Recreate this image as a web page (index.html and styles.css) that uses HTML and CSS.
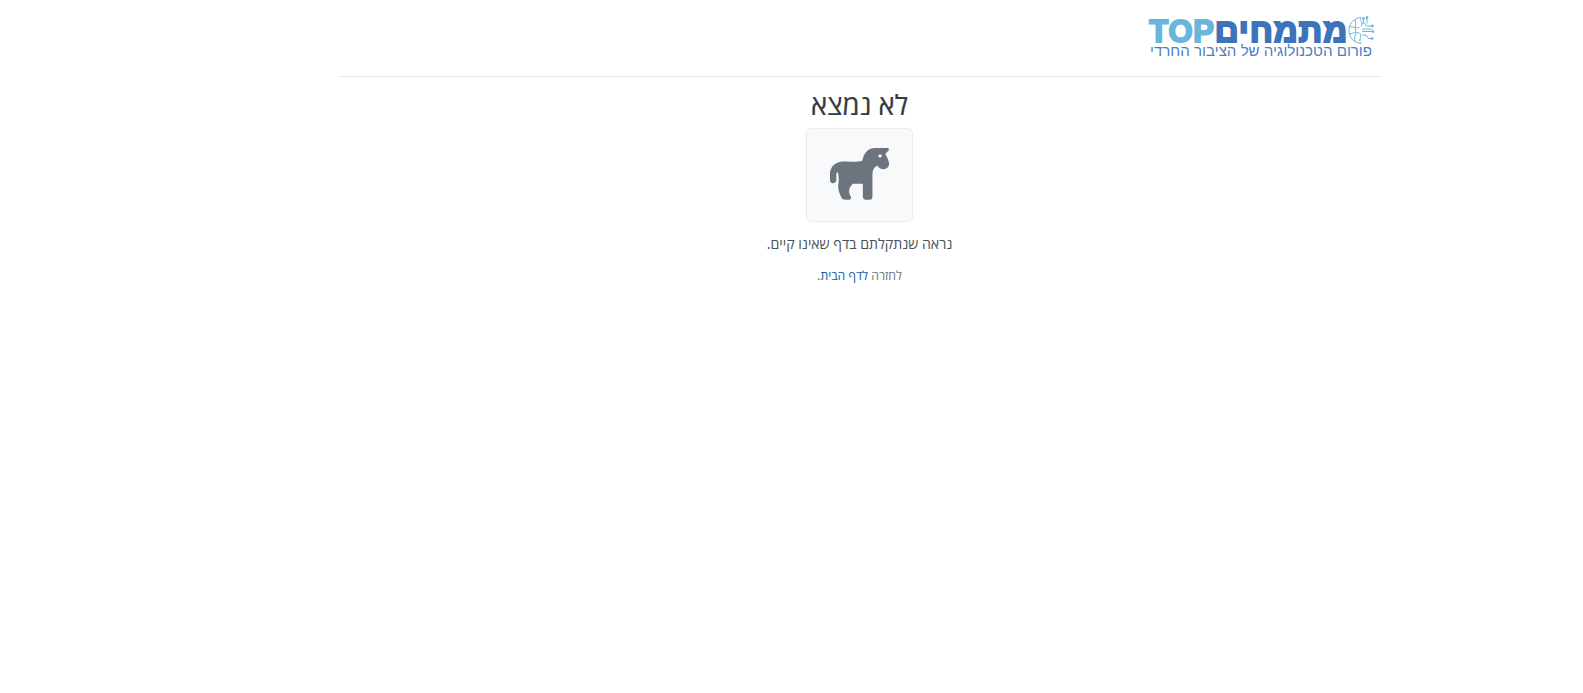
FILE: index.html
```html
<!DOCTYPE html>
<html lang="he" dir="rtl">
<head>
<meta charset="utf-8">
<title>לא נמצא</title>
<link rel="stylesheet" href="styles.css">
</head>
<body>
<div class="wrap">
  <header class="head">
    <a class="logo" href="#">
      <span class="logo-top">
        <svg class="logo-mark" viewBox="0 0 26 29" width="26" height="29" fill="none" stroke="#6db7dc" stroke-width="1">
          <path d="M13 1.500C6 2 1 7.500 1 14.500S6 27 13 27.500"/>
          <path d="M13 1.500c-2 3 3 5 0 9M1.500 10.500c4 0 6 2 10 1M1.500 18c4-1 6-2 10-1M13 27.500c-3-3 1-6-1-10M7 4c2 5-1 9 1 13M7 25.500c-1-3 0-6 1-8"/>
          <path d="M14 7h2.500l2 3h6M14 13h10M14 15.500h11.500M14 19h4l2.500 3.500h3M15.500 2.500V7M19 1.500v6"/>
          <circle cx="15.500" cy="2.500" r="1" fill="#6db7dc"/><circle cx="19" cy="1.500" r="1" fill="#6db7dc"/><circle cx="24.500" cy="10" r="1" fill="#6db7dc"/><circle cx="25" cy="15.500" r="1" fill="#6db7dc"/><circle cx="24" cy="22.500" r="1" fill="#6db7dc"/>
        </svg>
        <span class="logo-words"><span class="logo-he">מתמחים</span><span class="logo-en" dir="ltr">TOP</span></span>
      </span>
      <span class="logo-sub">פורום הטכנולוגיה של הציבור החרדי</span>
    </a>
  </header>
  <main class="main">
    <h1 class="title">לא נמצא</h1>
    <div class="icon-box">
      <svg class="horse" viewBox="140 175 196 190" width="65" height="63" fill="#6c757d">
        <path d="M326 187H285C265 187 252 200 246 226C235 229 210 228 185 228C165 230 151 243 149 262V285C150 291 154 294 159 293C164 292 168 289 168 284V266C169 262 171 260 173 260C175 270 176 280 175 292C173 300 173 310 177 322L184 338C186 341 190 343 195 343H208C212 342 214 338 212 334C208 327 206 322 207 314C208 306 212 301 218 295H248V333C248 339 252 343 257 343H268C274 343 277 339 277 333V268C277 255 281 246 291 240C296 247 302 251 311 251C322 250 328 243 327 233C326 222 320 213 316 205C319 200 323 197 326 195Z"/>
        <circle cx="300" cy="211" r="5" fill="#f8f9fa"/>
      </svg>
    </div>
    <p class="msg">נראה שנתקלתם בדף שאינו קיים.</p>
    <p class="back">לחזרה <a href="#">לדף הבית</a>.</p>
  </main>
</div>
</body>
</html>
```
FILE: styles.css
```css
* { box-sizing: border-box; }
html, body { margin: 0; padding: 0; background: #fff; }
body {
  height: 693px;
  overflow: hidden;
  font-family: "Noto Sans", "Open Sans", "Liberation Sans", sans-serif;
  color: #343a40;
}
.wrap {
  width: 1043px;
  margin-right: 202px;
}
.head {
  height: 77px;
  border-bottom: 1px solid #e9ecef;
  padding: 16px 7px 0 0;
}
.logo {
  display: inline-flex;
  flex-direction: column;
  text-decoration: none;
  width: 226px;
}
.logo-top {
  display: flex;
  align-items: flex-start;
  height: 27px;
  font-family: "Liberation Sans", sans-serif;
  font-weight: 700;
}
.logo-mark { flex: none; }
.logo-words {
  line-height: 29px;
  white-space: nowrap;
}
.logo-he {
  font-size: 33px;
  color: #3d73b8;
  letter-spacing: 0.900px;
  -webkit-text-stroke: 2px #3d73b8;
}
.logo-en {
  font-size: 31px;
  color: #69b5dc;
  letter-spacing: 0.800px;
  -webkit-text-stroke: 2px #69b5dc;
}
.logo-sub {
  font-family: "Liberation Sans", sans-serif;
  font-size: 15.100px;
  line-height: 15px;
  color: #4d7fbd;
  padding-right: 2px;
  white-space: nowrap;
}
.main {
  display: flex;
  flex-direction: column;
  align-items: center;
}
.title {
  margin: 7px 0 0;
  font-size: 27.500px;
  line-height: 42px;
  font-weight: 400;
  color: #343a40;
  -webkit-text-stroke: 0.2px #343a40;
}
.icon-box {
  width: 107px;
  height: 94px;
  margin-top: 2px;
  display: flex;
  align-items: center;
  justify-content: center;
  background: #f8f9fa;
  border: 1px solid #e9ecef;
  border-radius: 5px;
}
.msg {
  margin: 11px 0 0;
  font-size: 14.150px;
  line-height: 21px;
  color: #495057;
}
.back {
  margin: 12px 0 0;
  font-size: 12.250px;
  line-height: 20px;
  color: #6c757d;
}
.back a { color: #0d5ca8; text-decoration: none; }
```
